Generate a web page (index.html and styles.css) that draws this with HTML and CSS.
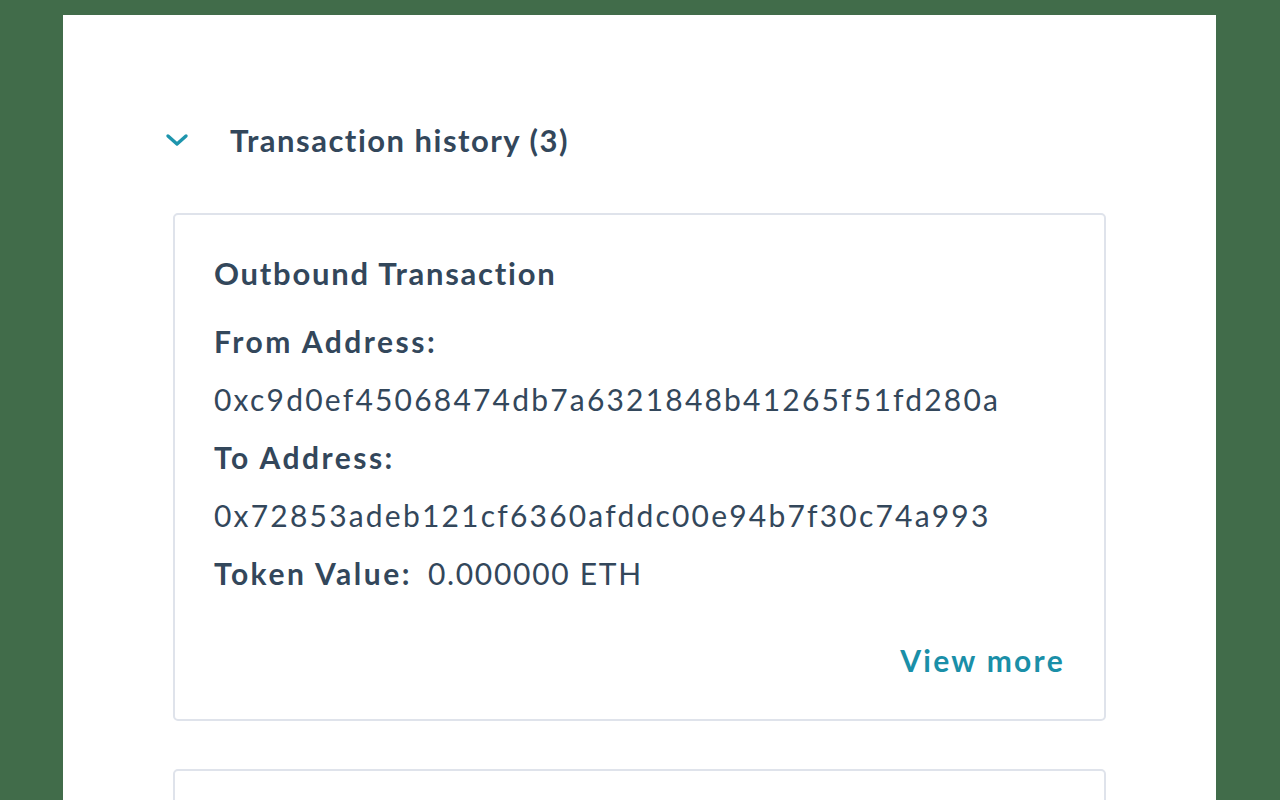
FILE: index.html
```html
<!DOCTYPE html>
<html lang="en">
<head>
    <meta charset="UTF-8">
    <meta name="viewport" content="width=device-width, initial-scale=1.0">
    <title>Transaction history</title>
    <link rel="stylesheet" href="styles.css">
</head>
<body>
    <div class="panel">
        <div class="section-head">
            <svg class="chevron" width="24" height="16" viewBox="0 0 24 16">
                <path d="M3 4 L12 12 L21 4" fill="none" stroke="#1e95ad" stroke-width="3.4" stroke-linecap="round" stroke-linejoin="round"/>
            </svg>
            <h2 class="section-title">Transaction history (3)</h2>
        </div>
        <div class="cards">
            <div class="card">
                <h3 class="card-title">Outbound Transaction</h3>
                <div class="label">From Address:</div>
                <div class="value">0xc9d0ef45068474db7a6321848b41265f51fd280a</div>
                <div class="label">To Address:</div>
                <div class="value">0x72853adeb121cf6360afddc00e94b7f30c74a993</div>
                <div class="row">
                    <span class="label">Token Value:</span>
                    <span class="value">0.000000 ETH</span>
                </div>
                <div class="card-foot">
                    <a class="more" href="#">View more</a>
                </div>
            </div>
            <div class="card"></div>
        </div>
    </div>
</body>
</html>
```

FILE: styles.css
```css
*{
    margin: 0;
    padding: 0;
    box-sizing: border-box;
}
body{
    background-color: #416c4a;
    font-family: "Lato", "Noto Sans", sans-serif;
    color: #33475b;
    overflow: hidden;
}
.panel{
    margin: 15px 0 0 63px;
    width: 1153px;
    height: 785px;
    background-color: #fff;
    padding: 108px 0 0 110px;
}
.section-head{
    display: flex;
    align-items: center;
    height: 34px;
}
.chevron{
    margin-left: -8px;
    margin-right: 41px;
}
.section-title{
    font-size: 31px;
    font-weight: 700;
    letter-spacing: 1.5px;
}
.cards{
    margin-top: 56px;
    display: flex;
    flex-direction: column;
    gap: 48px;
}
.card{
    width: 933px;
    min-height: 508px;
    border: 2px solid #dfe3eb;
    border-radius: 5px;
    padding: 36px 39px 0 39px;
}
.card-title{
    font-size: 31px;
    font-weight: 700;
    line-height: 44px;
    letter-spacing: 1.75px;
    margin-bottom: 17px;
}
.label{
    font-size: 30px;
    font-weight: 700;
    line-height: 58px;
    letter-spacing: 2.5px;
}
.value{
    font-size: 30px;
    font-weight: 400;
    line-height: 58px;
    letter-spacing: 2.2px;
}
.row{
    display: flex;
    gap: 16px;
}
.row .value{
    letter-spacing: 1.7px;
}
.card-foot{
    display: flex;
    justify-content: flex-end;
    margin-top: 40px;
}
.more{
    color: #1a8fa8;
    font-size: 30px;
    font-weight: 700;
    letter-spacing: 2.3px;
    text-decoration: none;
}
```
